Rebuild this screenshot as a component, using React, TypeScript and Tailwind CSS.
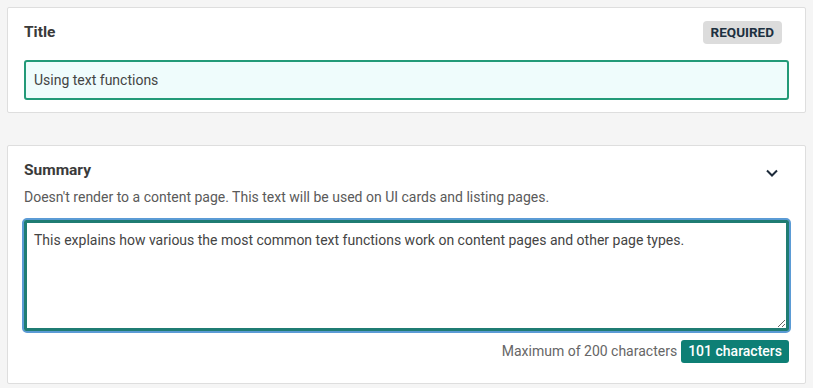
import React from 'react';

export default function App() {
  const summary =
    'This explains how various the most common text functions work on content pages and other page types.';

  return (
    <div className="min-h-screen w-[813px] h-[388px] bg-[#f5f5f5] px-[7px] pt-[7px] font-['Roboto',sans-serif] text-[#333]">
      {/* Title card */}
      <div className="bg-white border border-[#dedede] rounded-[2px] px-4 pt-3 pb-3 h-[106px]">
        <div className="flex items-center justify-between h-[25px]">
          <h2 className="text-[15.5px] font-bold text-[#3a3a3a]">Title</h2>
          <span className="mr-[7px] bg-[#dcdcdc] text-[#1d3040] text-[13.5px] font-bold px-[8px] h-[23px] leading-[23px] rounded-[4px]">
            REQUIRED
          </span>
        </div>
        <div className="mt-[15px] h-[40px] border-2 border-[#239a78] bg-[#effcfc] rounded-[3px] flex items-center px-[8px] text-[14px] text-[#444]">
          Using text functions
        </div>
      </div>

      {/* Summary card */}
      <div className="mt-[32px] bg-white border border-[#dedede] rounded-[2px] px-4 pt-[14px] h-[239px]">
        <div className="flex items-center justify-between h-[22px]">
          <h2 className="text-[15.5px] font-bold text-[#3a3a3a]">Summary</h2>
          <svg
            className="mr-[10px] mt-[4px]"
            width="14"
            height="10"
            viewBox="0 0 14 10"
            fill="none"
          >
            <path d="M2 2.5 L7 7.5 L12 2.5" stroke="#1d2b3a" strokeWidth="2" />
          </svg>
        </div>
        <p className="mt-[5px] text-[14px] text-[#5a5a5a] leading-[20px]">
          Doesn't render to a content page. This text will be used on UI cards and listing pages.
        </p>
        <div className="mt-[11px] -mx-[2px] rounded-[5px] border-2 border-[#5b9bd5]">
          <textarea
            readOnly
            value={summary}
            className="block w-full h-[111px] border-[3px] border-[#1f7c73] rounded-[2px] bg-white px-[7px] pt-[7px] pb-[5px] text-[14px] text-[#444] outline-none resize-y font-['Roboto',sans-serif]"
          />
        </div>
        <div className="mt-[7px] flex items-center justify-end gap-[4px]">
          <span className="text-[14px] text-[#666]">Maximum of 200 characters</span>
          <span className="bg-[#0e7f75] text-white text-[14px] font-medium px-[7px] h-[23px] leading-[23px] rounded-[3px]">
            101 characters
          </span>
        </div>
      </div>
    </div>
  );
}
